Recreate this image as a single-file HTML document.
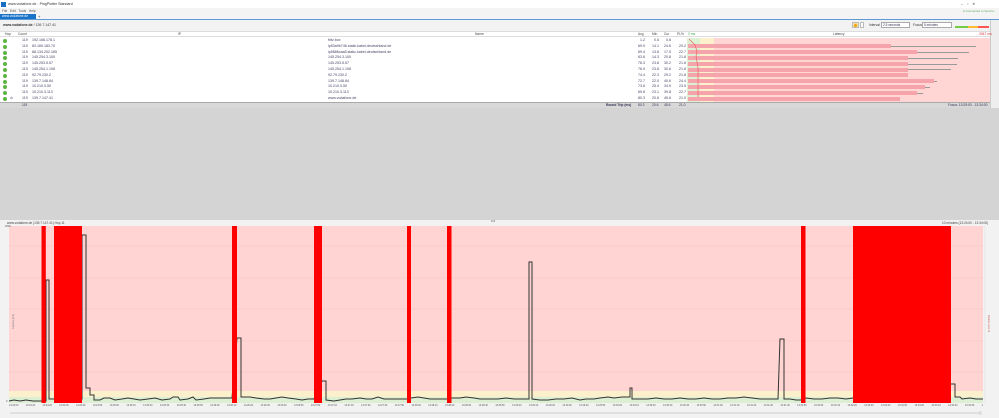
<!DOCTYPE html>
<html><head><meta charset="utf-8"><style>
*{margin:0;padding:0;box-sizing:border-box}
body{width:999px;height:418px;position:relative;overflow:hidden;background:#fff;font-family:"Liberation Sans",sans-serif;font-size:4px;color:#335}
.a{position:absolute;white-space:nowrap}
.r{position:absolute;left:0;width:687px;height:5.8px;font-size:3.6px;line-height:5.8px;color:#446}
.r span{position:absolute}
.dot{width:4px;height:4px;border-radius:50%;background:#5bb543;top:1px;left:3px}
.bar{position:absolute;left:688px;height:4px;background:#f4a4aa}
</style></head><body>
<div class="a" style="left:0;top:0;width:999px;height:8px;background:#fff;font-size:3.6px;line-height:8px;color:#333"><span style="display:inline-block;width:5px;height:5px;background:#1a6fc4;margin:0 2px 0 1px;vertical-align:middle"></span>www.vodafone.de - PingPlotter Standard<span style="position:absolute;left:961px">–&nbsp;&nbsp;&nbsp;&nbsp;▫&nbsp;&nbsp;&nbsp;&nbsp;✕</span></div>
<div class="a" style="left:0;top:8px;width:999px;height:6px;background:#f4f4f4;font-size:3.3px;line-height:6px;color:#555;padding-left:2px">File&nbsp;&nbsp; Edit&nbsp;&nbsp; Tools&nbsp;&nbsp; Help<span style="position:absolute;left:963px;color:#6a6;font-size:3px">● Connected to Service</span></div>
<div class="a" style="left:0;top:14px;width:999px;height:5px;background:#f4f4f4"></div>
<div class="a" style="left:0;top:14px;width:36px;height:5px;background:#1a73c9;color:#fff;font-size:3.3px;line-height:5px;padding-left:2px">www.vodafone.de</div>
<div class="a" style="left:38px;top:14px;font-size:4px;line-height:5px;color:#333">+</div>
<div class="a" style="left:0;top:19px;width:999px;height:1px;background:#5d9bd6"></div>
<div class="a" style="left:0;top:20px;width:999px;height:11px;background:#f2f2f2;font-size:3.5px;line-height:11px;padding-left:3px;color:#333"><b>www.vodafone.de</b> / 139.7.147.41</div>
<div class="a" style="left:852px;top:22px;width:7px;height:6px;background:#f6dfa0;border:1px solid #bbb"></div>
<div class="a" style="left:854px;top:23.5px;width:3px;height:3px;border-radius:50%;background:#f5a000"></div>
<div class="a" style="left:860px;top:22px;width:4px;height:6px;background:#fff;border:1px solid #bbb"></div>
<div class="a" style="left:869px;top:22px;font-size:3.3px;line-height:6px;color:#333">Interval</div>
<div class="a" style="left:881px;top:22px;width:29px;height:6px;background:#fff;border:1px solid #aaa;font-size:3.2px;line-height:5px;padding-left:1px">2.5 seconds</div>
<div class="a" style="left:913px;top:22px;font-size:3.3px;line-height:6px;color:#333">Focus</div>
<div class="a" style="left:922px;top:22px;width:30px;height:6px;background:#fff;border:1px solid #aaa;font-size:3.2px;line-height:5px;padding-left:1px">5 minutes</div>
<div class="a" style="left:955px;top:26px;width:13px;height:1.5px;background:#7c4"></div>
<div class="a" style="left:968px;top:26px;width:10px;height:1.5px;background:#fb3"></div>
<div class="a" style="left:978px;top:26px;width:11px;height:1.5px;background:#f55"></div>
<div class="a" style="left:990px;top:20px;width:9px;height:88px;background:#eee;border-left:1px solid #ccc"></div>
<div class="a" style="left:0;top:31px;width:990px;height:6px;background:#fff;border-bottom:1px solid #ddd;border-top:1px solid #ddd;font-size:3.3px;line-height:5px;color:#444">
<span class="a" style="left:5px">Hop</span><span class="a" style="left:18px">Count</span><span class="a" style="left:178px">IP</span><span class="a" style="left:475px">Name</span><span class="a" style="left:638px">Avg</span><span class="a" style="left:652px">Min</span><span class="a" style="left:664px">Cur</span><span class="a" style="left:677px">PL%</span><span class="a" style="left:688px;color:#4a4">0 ms</span><span class="a" style="left:833px">Latency</span><span class="a" style="left:979px;color:#c33">3347 ms</span></div>
<div class="a" style="left:687px;top:38px;width:13px;height:64px;background:#dcf0d4"></div>
<div class="a" style="left:700px;top:38px;width:14px;height:64px;background:#fdf0cc"></div>
<div class="a" style="left:714px;top:38px;width:276px;height:64px;background:#ffd6d4"></div>
<div class="bar" style="top:44px;width:203px"></div><div class="a" style="left:891px;top:45.5px;width:85px;height:.6px;background:#999"></div>
<div class="bar" style="top:50px;width:229px"></div><div class="a" style="left:917px;top:51.5px;width:52px;height:.6px;background:#999"></div>
<div class="bar" style="top:56px;width:220px"></div><div class="a" style="left:908px;top:57.5px;width:50px;height:.6px;background:#999"></div>
<div class="bar" style="top:62px;width:220px"></div><div class="a" style="left:908px;top:63.5px;width:49px;height:.6px;background:#999"></div>
<div class="bar" style="top:67.5px;width:220px"></div><div class="a" style="left:908px;top:69px;width:43px;height:.6px;background:#999"></div>
<div class="bar" style="top:73px;width:220px"></div>
<div class="bar" style="top:79px;width:246px"></div><div class="a" style="left:934px;top:80.5px;width:3px;height:.6px;background:#999"></div>
<div class="bar" style="top:85px;width:237px"></div><div class="a" style="left:925px;top:86.5px;width:5px;height:.6px;background:#999"></div>
<div class="bar" style="top:91px;width:229px"></div><div class="a" style="left:917px;top:92.5px;width:6px;height:.6px;background:#999"></div>
<div class="bar" style="top:96.5px;width:212px"></div>
<svg class="a" style="left:0;top:0" width="999" height="110"><polyline points="689,39 695,45 697,51 696,56 697,62 698,68 698,74 698,80 698,85 698,91 698,97" fill="none" stroke="#e55" stroke-width=".6"/></svg>
<div class="r" style="top:38px"><div class="a dot"></div><span style="left:22px">119</span><span style="left:32px">192.168.178.1</span><span style="left:328px">fritz.box</span><span style="left:640px">1.2</span><span style="left:654px">0.5</span><span style="left:666px">0.6</span></div>
<div class="r" style="top:43.8px"><div class="a dot"></div><span style="left:22px">119</span><span style="left:32px">83.169.183.70</span><span style="left:328px">ip53a9b746.static.kabel-deutschland.de</span><span style="left:638px">69.9</span><span style="left:652px">14.1</span><span style="left:664px">24.6</span><span style="left:679px">20.2</span></div>
<div class="r" style="top:49.6px"><div class="a dot"></div><span style="left:22px">119</span><span style="left:32px">88.134.202.165</span><span style="left:328px">ip5886caa5.static.kabel-deutschland.de</span><span style="left:638px">69.4</span><span style="left:652px">13.8</span><span style="left:664px">17.5</span><span style="left:679px">22.7</span></div>
<div class="r" style="top:55.4px"><div class="a dot"></div><span style="left:22px">119</span><span style="left:32px">145.254.3.100</span><span style="left:328px">145.254.3.100</span><span style="left:638px">63.6</span><span style="left:652px">14.3</span><span style="left:664px">20.8</span><span style="left:679px">21.8</span></div>
<div class="r" style="top:61.2px"><div class="a dot"></div><span style="left:22px">119</span><span style="left:32px">145.253.5.57</span><span style="left:328px">145.253.5.57</span><span style="left:638px">78.3</span><span style="left:652px">23.8</span><span style="left:664px">30.2</span><span style="left:679px">21.8</span></div>
<div class="r" style="top:67px"><div class="a dot"></div><span style="left:22px">119</span><span style="left:32px">145.254.1.108</span><span style="left:328px">145.254.1.108</span><span style="left:638px">76.9</span><span style="left:652px">23.8</span><span style="left:664px">30.6</span><span style="left:679px">21.8</span></div>
<div class="r" style="top:72.8px"><div class="a dot"></div><span style="left:22px">119</span><span style="left:32px">92.79.230.2</span><span style="left:328px">92.79.230.2</span><span style="left:638px">74.4</span><span style="left:652px">22.3</span><span style="left:664px">29.2</span><span style="left:679px">21.8</span></div>
<div class="r" style="top:78.6px"><div class="a dot"></div><span style="left:22px">119</span><span style="left:32px">139.7.148.84</span><span style="left:328px">139.7.148.84</span><span style="left:638px">72.7</span><span style="left:652px">22.0</span><span style="left:664px">40.6</span><span style="left:679px">24.4</span></div>
<div class="r" style="top:84.4px"><div class="a dot"></div><span style="left:22px">119</span><span style="left:32px">10.210.0.50</span><span style="left:328px">10.210.0.50</span><span style="left:638px">73.6</span><span style="left:652px">25.4</span><span style="left:664px">34.9</span><span style="left:679px">23.5</span></div>
<div class="r" style="top:90.2px"><div class="a dot"></div><span style="left:22px">119</span><span style="left:32px">10.210.3.113</span><span style="left:328px">10.210.3.113</span><span style="left:638px">69.6</span><span style="left:652px">23.1</span><span style="left:664px">39.8</span><span style="left:679px">22.7</span></div>
<div class="r" style="top:96px"><div class="a dot"></div><span style="left:10px">ılı</span><span style="left:22px">119</span><span style="left:32px">139.7.147.41</span><span style="left:328px">www.vodafone.de</span><span style="left:638px">80.3</span><span style="left:652px">20.6</span><span style="left:664px">45.6</span><span style="left:679px">21.0</span></div>
<div class="a" style="left:0;top:101.5px;width:990px;height:6.5px;background:#d8d8d8;border-top:1px solid #aaa;font-size:3.3px;line-height:5.5px;color:#335"><span class="a" style="left:22px">119</span><span class="a" style="left:606px;font-weight:bold">Round Trip (ms)</span><span class="a" style="left:638px">80.3</span><span class="a" style="left:652px">20.6</span><span class="a" style="left:664px">45.6</span><span class="a" style="left:679px">21.0</span><span class="a" style="left:948px">Focus: 13:29:00 - 13:34:00</span></div>
<div class="a" style="left:0;top:108px;width:999px;height:112px;background:#d4d4d4"></div>
<div class="a" style="left:0;top:220px;width:999px;height:198px;background:#f2f2f2"></div>
<div class="a" style="left:7px;top:220px;font-size:3.2px;line-height:6px;color:#444">www.vodafone.de (139.7.147.41) Hop 11</div>
<div class="a" style="left:942px;top:220px;font-size:3.2px;line-height:6px;color:#444">10 minutes (13:24:00 - 13:34:00)</div>
<div class="a" style="left:491px;top:218px;font-size:4px;color:#555">•••</div>
<svg class="a" style="left:0;top:0" width="999" height="418">
<rect x="9" y="226" width="974" height="165" fill="#ffd4d2"/>
<rect x="9" y="391" width="974" height="6" fill="#fcf0cc"/>
<rect x="9" y="397" width="974" height="6" fill="#dcefd2"/>
<g stroke="#f0c0c0" stroke-width=".4"><line x1="9" y1="246" x2="983" y2="246"/><line x1="9" y1="278" x2="983" y2="278"/><line x1="9" y1="309" x2="983" y2="309"/><line x1="9" y1="341" x2="983" y2="341"/><line x1="9" y1="372" x2="983" y2="372"/></g>
<polyline fill="none" stroke="#333" stroke-width="1" points="9,401 14,400 20,401 26,400 33,401 41,401 46,401 46,280 49,280 49,399 54,399 82,399 82,235 86,235 86,388 90,388 90,395 94,395 94,400 100,400 104,398 110,398 115,400 122,399 128,398 134,399 140,400 148,399 155,398 162,400 170,399 173,397 178,397 180,400 188,399 193,397 196,400 204,399 210,398 216,398 222,398 232,398 237,338 241,338 241,397 250,397 256,398 264,399 270,399 276,398 282,397 288,398 296,399 302,400 308,399 314,399 322,381 326,381 326,400 334,401 340,400 346,399 352,399 360,398 366,399 372,399 378,397 384,399 392,399 398,399 407,399 411,398 418,397 424,398 430,399 436,399 442,399 447,399 452,398 460,398 466,397 474,398 480,399 490,399 498,399 506,398 514,399 520,399 529,399 529,262 532,262 532,399 540,400 548,400 556,399 564,399 572,398 580,400 586,399 594,399 600,398 608,397 614,398 622,397 630,397 630,388 632,388 632,399 640,399 648,399 656,398 664,399 672,399 680,398 688,399 696,399 704,398 712,399 720,399 728,398 736,398 744,397 752,398 760,399 768,399 778,399 780,339 784,339 784,399 790,399 796,400 801,400 806,398 814,399 822,399 830,398 838,398 846,399 853,398 951,384 955,384 955,397 960,397 962,399 970,398 976,399 983,399"/>
<g fill="#ff0000"><rect x="41.5" y="226" width="4.3" height="177"/><rect x="54" y="226" width="28" height="177"/><rect x="232" y="226" width="5" height="177"/><rect x="314" y="226" width="8" height="177"/><rect x="407" y="226" width="4" height="177"/><rect x="447" y="226" width="4.5" height="177"/><rect x="801" y="226" width="4.5" height="177"/><rect x="853" y="226" width="98" height="177"/></g>
<line x1="10" y1="413" x2="980" y2="413" stroke="#aaa" stroke-width=".6"/>
<circle cx="980" cy="413" r="2" fill="#ddd"/>
<line x1="985" y1="226" x2="985" y2="403" stroke="#ddd" stroke-width=".5"/>
</svg>
<div class="a" style="left:5px;top:225px;font-size:2.6px;color:#555">2000</div>
<div class="a" style="left:6px;top:400px;font-size:2.6px;color:#555">0</div>
<div class="a" style="left:6px;top:320px;font-size:2.6px;color:#777;transform:rotate(-90deg)">Latency (ms)</div>
<div class="a" style="left:980px;top:322px;font-size:2.6px;color:#c55;transform:rotate(90deg)">Packet Loss %</div>
<div class="a" style="left:9px;top:404px;width:974px;font-size:2.4px;color:#555;word-spacing:6.8px;overflow:hidden">13:24:00 13:24:10 13:24:20 13:24:30 13:24:40 13:24:50 13:25:00 13:25:10 13:25:20 13:25:30 13:25:40 13:25:50 13:26:00 13:26:10 13:26:20 13:26:30 13:26:40 13:26:50 13:27:00 13:27:10 13:27:20 13:27:30 13:27:40 13:27:50 13:28:00 13:28:10 13:28:20 13:28:30 13:28:40 13:28:50 13:29:00 13:29:10 13:29:20 13:29:30 13:29:40 13:29:50 13:30:00 13:30:10 13:30:20 13:30:30 13:30:40 13:30:50 13:31:00 13:31:10 13:31:20 13:31:30 13:31:40 13:31:50 13:32:00 13:32:10 13:32:20 13:32:30 13:32:40 13:32:50 13:33:00 13:33:10 13:33:20 13:33:30 13:33:40 13:33:50 13:34:00</div>
</body></html>
